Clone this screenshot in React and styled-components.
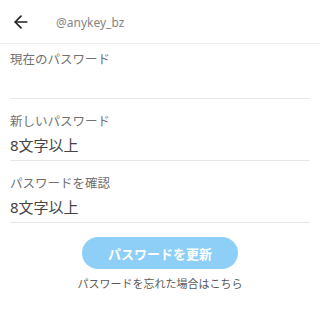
import React from "react"
import styled, { createGlobalStyle } from "styled-components"
import { ArrowLeft } from "lucide-react"

const Global = createGlobalStyle`
	html, body {
		margin: 0;
		padding: 0;
		background: #fff;
	}
	body {
		font-family: "Noto Sans", "Noto Sans CJK JP", sans-serif;
	}
`

const Page = styled.div`
	width: 320px;
	height: 320px;
	background: #fff;
	overflow: hidden;
`

const Header = styled.div`
	display: flex;
	align-items: center;
	gap: 25px;
	height: 43px;
	padding-left: 11px;
	border-bottom: 1px solid #eeeeee;
	color: #222;
`

const Handle = styled.span`
	font-size: 12px;
	color: #858585;
	margin-top: 1px;
`

const Form = styled.div`
	display: flex;
	flex-direction: column;
	padding: 0 10px;
`

const Field = styled.div`
	display: flex;
	flex-direction: column;
	gap: 4px;
	padding: ${p => (p.$first ? "8px" : "15px")} 0 4px;
	border-bottom: 1px solid #e6e6e6;
`

const Label = styled.label`
	font-size: 12.5px;
	line-height: 16px;
	color: #707070;
`

const Value = styled.div`
	font-size: 15px;
	line-height: 22px;
	height: 22px;
	color: #444;
`

const Actions = styled.div`
	display: flex;
	flex-direction: column;
	align-items: center;
	gap: 7px;
	padding-top: 14px;
`

const Button = styled.button`
	width: 156px;
	height: 32px;
	border: none;
	border-radius: 16px;
	background: #8ecff8;
	color: #fff;
	font-family: inherit;
	font-size: 13px;
	font-weight: 700;
`

const Forgot = styled.a`
	font-size: 11px;
	line-height: 16px;
	color: #5a5a5a;
	text-decoration: none;
`

export default function App() {
	return (
		<Page>
			<Global />
			<Header>
				<ArrowLeft size={20} strokeWidth={2} />
				<Handle>@anykey_bz</Handle>
			</Header>
			<Form>
				<Field $first>
					<Label>現在のパスワード</Label>
					<Value></Value>
				</Field>
				<Field>
					<Label>新しいパスワード</Label>
					<Value>8文字以上</Value>
				</Field>
				<Field>
					<Label>パスワードを確認</Label>
					<Value>8文字以上</Value>
				</Field>
			</Form>
			<Actions>
				<Button>パスワードを更新</Button>
				<Forgot>パスワードを忘れた場合はこちら</Forgot>
			</Actions>
		</Page>
	)
}
